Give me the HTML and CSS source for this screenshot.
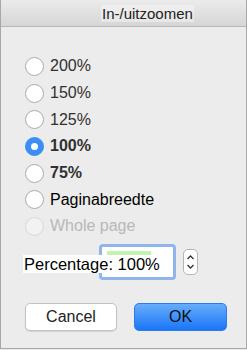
FILE: index.html
```html
<!DOCTYPE html>
<html>
<head>
<meta charset="utf-8">
<link rel="stylesheet" href="styles.css">
</head>
<body>
<div class="window">
  <div class="titlebar"><span class="title">In-/uitzoomen</span></div>
  <div class="content">
    <ul class="options">
      <li class="opt"><span class="radio"></span><span class="lbl">200%</span></li>
      <li class="opt"><span class="radio"></span><span class="lbl">150%</span></li>
      <li class="opt"><span class="radio"></span><span class="lbl">125%</span></li>
      <li class="opt"><span class="radio on"></span><span class="lbl bold">100%</span></li>
      <li class="opt"><span class="radio"></span><span class="lbl bold">75%</span></li>
      <li class="opt"><span class="radio"></span><span class="lbl black">Paginabreedte</span></li>
      <li class="opt disabled"><span class="radio"></span><span class="lbl">Whole page</span></li>
    </ul>
    <div class="pct-row">
      <div class="input"><span class="sel"></span></div>
      <span class="pct-label">Percentage: 100%</span>
      <div class="stepper">
        <svg width="15" height="26" viewBox="0 0 15 26"><path d="M4.5 10 L7.5 7 L10.5 10" fill="none" stroke="#333" stroke-width="1.3"/><path d="M4.5 16 L7.5 19 L10.5 16" fill="none" stroke="#333" stroke-width="1.3"/></svg>
      </div>
    </div>
    <div class="buttons">
      <button class="btn cancel">Cancel</button>
      <button class="btn ok">OK</button>
    </div>
  </div>
</div>
</body>
</html>
```
FILE: styles.css
```css
* { box-sizing: border-box; }
html, body { margin: 0; padding: 0; background: #ececec; }
body { font-family: "Liberation Sans", Arial, sans-serif; }
.window {
  width: 247px;
  height: 349px;
  border: 1px solid #a8a8a8;
  border-top: none;
  background: #ececec;
  display: flex;
  flex-direction: column;
}
.titlebar {
  height: 27px;
  background: linear-gradient(#ebebeb, #d6d6d6);
  border-bottom: 1px solid #b8b8b8;
  display: flex;
  align-items: center;
  padding-left: 100px;
}
.title {
  font-size: 15px;
  color: #222;
  background: rgba(255,255,255,0.35);
  padding: 0 1px;
}
.content { padding: 26px 0 0 24px; }
.options { list-style: none; margin: 0; padding: 0; }
.opt {
  height: 26.7px;
  display: flex;
  align-items: center;
  gap: 6px;
}
.radio {
  width: 19px;
  height: 19px;
  border-radius: 50%;
  border: 1.5px solid #acacac;
  background: #fff;
  display: flex;
  align-items: center;
  justify-content: center;
  flex: none;
}
.radio.on { background: #3a8ef5; border-color: #3a8ef5; }
.radio.on::after {
  content: "";
  width: 7px; height: 7px;
  border-radius: 50%;
  background: #fff;
}
.lbl { font-size: 16px; color: #303030; }
.lbl.bold { font-weight: bold; }
.lbl.black { color: #000; }
.disabled .radio { border-color: #d8d8d8; background: #f2f2f2; }
.disabled .lbl { color: #b8b8b8; }
.pct-row {
  position: relative;
  margin-top: 3px;
  height: 38px;
  display: flex;
  align-items: center;
  padding-left: 74px;
  gap: 7px;
}
.input {
  width: 77px;
  height: 36px;
  border: 3px solid #8fb5ec;
  border-radius: 4px;
  background: #fff;
  padding: 4px 0 0 5px;
}
.sel { display: block; width: 44px; height: 5px; background: #c4f3b0; }
.pct-label {
  position: absolute;
  left: -2px;
  top: 12px;
  font-size: 16.5px;
  color: #000;
  background: #fff;
  line-height: 18px;
  padding: 0 1px;
}
.stepper {
  width: 15px;
  height: 26px;
  border: 1px solid #b5b5b5;
  border-radius: 5px;
  background: #fff;
  display: flex;
}
.stepper svg { margin: -1px; }
.buttons {
  display: flex;
  gap: 17px;
  margin-top: 22px;
}
.btn {
  width: 92px;
  height: 28px;
  border-radius: 5px;
  font-family: "Liberation Sans", Arial, sans-serif;
  font-size: 16px;
  padding: 0;
}
.cancel {
  background: #fff;
  border: 1px solid #c2c2c2;
  color: #222;
  box-shadow: 0 1px 1px rgba(0,0,0,0.1);
}
.ok {
  width: 93px;
  background: linear-gradient(#66aefb, #1a75f8);
  border: 1px solid #2c7be6;
  color: #111;
}
```
